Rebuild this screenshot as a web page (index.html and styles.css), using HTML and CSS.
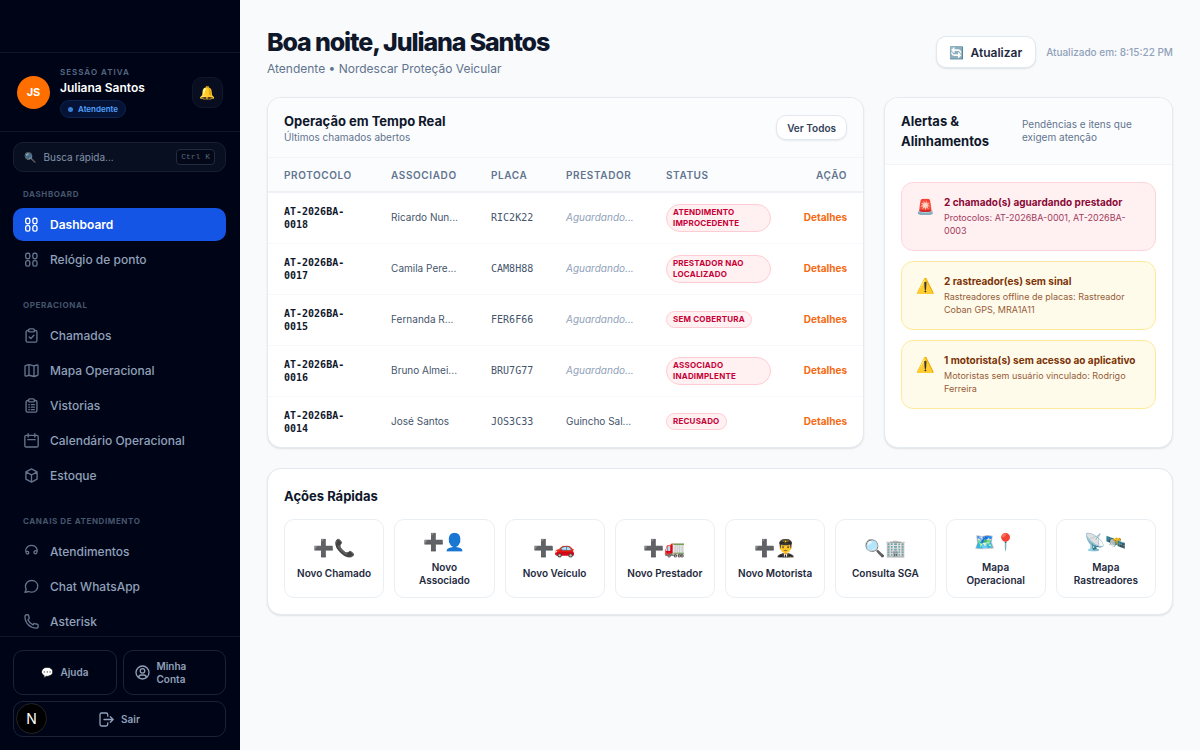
FILE: index.html
```html
<!DOCTYPE html>
<html lang="pt-BR">
<head>
    <meta charset="UTF-8">
    <meta name="viewport" content="width=device-width, initial-scale=1">
    <title>Dashboard - Nordescar</title>
    <link rel="stylesheet" href="styles.css">
</head>
<body>
<div class="layout">
    <aside class="sidebar">
        <div class="brand"></div>
        <div class="profile">
            <div class="avatar">JS</div>
            <div class="profile-info">
                <span class="profile-label">Sessão ativa</span>
                <strong class="profile-name">Juliana Santos</strong>
                <span class="role"><i class="dot"></i>Atendente</span>
            </div>
            <button class="bell" type="button" aria-label="Notificações">🔔</button>
        </div>

        <button class="search" type="button">
            <span class="search-icon">🔍</span>
            <span class="search-text">Busca rápida...</span>
            <kbd>Ctrl K</kbd>
        </button>

        <nav class="nav">
            <section class="nav-group">
                <h2>Dashboard</h2>
                <a class="nav-link active" href="#">
                    <svg viewBox="0 0 18 18"><rect x="2" y="1.5" width="5" height="6.6" rx="2"/><rect x="10.6" y="1.5" width="5" height="6.6" rx="2"/><rect x="2" y="10.3" width="5" height="6.6" rx="2"/><rect x="10.6" y="10.3" width="5" height="6.6" rx="2"/></svg>
                    Dashboard
                </a>
                <a class="nav-link" href="#">
                    <svg viewBox="0 0 18 18"><rect x="2" y="1.5" width="5" height="6.6" rx="2"/><rect x="10.6" y="1.5" width="5" height="6.6" rx="2"/><rect x="2" y="10.3" width="5" height="6.6" rx="2"/><rect x="10.6" y="10.3" width="5" height="6.6" rx="2"/></svg>
                    Relógio de ponto
                </a>
            </section>
            <section class="nav-group">
                <h2>Operacional</h2>
                <a class="nav-link" href="#">
                    <svg viewBox="0 0 18 18"><path d="M5.5 3H4.2A1.7 1.7 0 0 0 2.5 4.700v10.600A1.700 1.700 0 0 0 4.200 17h9.600a1.700 1.700 0 0 0 1.700-1.700V4.700A1.700 1.700 0 0 0 13.800 3h-1.300"/><rect x="5.500" y="1" width="7" height="3.600" rx="1.400"/><path d="M6.200 10.700l2 2 3.600-4"/></svg>
                    Chamados
                </a>
                <a class="nav-link" href="#">
                    <svg viewBox="0 0 18 18"><path d="M1.200 4.200Q1.200 3 2.300 2.800L6 2l6 1.500 3.300-1.100q1.500-.4 1.500 1v10.400q0 .9-.9 1.200L12 16.200 6 14.700l-3.300 1q-1.500.4-1.500-1zM6 2v12.700M12 3.500v12.700"/></svg>
                    Mapa Operacional
                </a>
                <a class="nav-link" href="#">
                    <svg viewBox="0 0 18 18"><path d="M5.500 3H4.200A1.700 1.700 0 0 0 2.500 4.700v10.600A1.700 1.700 0 0 0 4.200 17h9.600a1.700 1.700 0 0 0 1.700-1.700V4.700A1.700 1.700 0 0 0 13.800 3h-1.300"/><rect x="5.500" y="1" width="7" height="3.600" rx="1.400"/><path d="M5.800 8h.6M8.800 8h3.600M5.800 11h.6M8.800 11h3.600M5.800 14h.6M8.800 14h3.600"/></svg>
                    Vistorias
                </a>
                <a class="nav-link" href="#">
                    <svg viewBox="0 0 18 18"><rect x="1" y="2.800" width="16" height="14" rx="1.600"/><path d="M5 .8v4M13 .8v4M4.600 8h8.800"/></svg>
                    Calendário Operacional
                </a>
                <a class="nav-link" href="#">
                    <svg viewBox="0 0 18 18"><path d="M9 1l6.700 3.600v8.800L9 17l-6.700-3.600V4.600zM2.300 4.600L9 8.400l6.700-3.800M9 8.400V17"/></svg>
                    Estoque
                </a>
            </section>
            <section class="nav-group">
                <h2>Canais de atendimento</h2>
                <a class="nav-link" href="#">
                    <svg viewBox="0 0 18 18"><path d="M4 12.200C1.800 10.400 1.600 7 3 4.800 5.400.6 12.600.6 15 4.800c1.400 2.400 1 6.400-1 7M4 12.200a1.700 1.700 0 1 0-.6-3.300M14 11.800a1.900 1.900 0 1 1 .7-3.600"/></svg>
                    Atendimentos
                </a>
                <a class="nav-link" href="#">
                    <svg viewBox="0 0 18 18"><path d="M9.300 1.800c4.200 0 7.200 3 7.200 6.900s-3 7-7.200 7c-1.400 0-2.500-.2-3.500-.7L1.200 16l1.500-3.800C2 11.200 1.700 10 1.700 8.800c0-4 3.200-7 7.600-7z"/></svg>
                    Chat WhatsApp
                </a>
                <a class="nav-link" href="#">
                    <svg viewBox="0 0 18 18"><path d="M1.200 3.400c0 7.600 5.900 13.500 13.400 13.500 1.400 0 2.400-1 2.400-2.300v-1c0-.7-.4-1.100-1-1.300l-2.900-.8c-.6-.2-1.100 0-1.500.5l-.7 1c-3-1.200-5.100-3.300-6.200-6.100l1-.8c.5-.4.7-.9.5-1.500l-.7-2.800C5.300 1.200 4.900.9 4.200.9H3.400C2.100.9 1.200 2 1.200 3.400z"/></svg>
                    Asterisk
                </a>
            </section>
        </nav>

        <div class="sidebar-footer">
            <button class="foot-btn" type="button"><span class="bubble">💬</span>Ajuda</button>
            <button class="foot-btn account" type="button">
                <svg viewBox="0 0 18 18"><circle cx="9" cy="9" r="7.800"/><circle cx="9" cy="7" r="2.700"/><path d="M4.300 15c.2-2 1.700-3 3.400-3h2.600c1.700 0 3.200 1 3.400 3"/></svg>
                <span>Minha Conta</span>
            </button>
            <button class="foot-btn logout" type="button">
                <svg viewBox="0 0 18 18"><path d="M10.500 5V3.200c0-1.200-.8-2-2-2H3.200c-1.200 0-2 .8-2 2v11.600c0 1.200.8 2 2 2h5.300c1.200 0 2-.8 2-2V13M6 9h11M13.600 5.600L17 9l-3.400 3.400"/></svg>
                Sair
            </button>
        </div>
    </aside>

    <main class="main">
        <header class="page-header">
            <div>
                <h1>Boa noite, Juliana Santos</h1>
                <p>Atendente • Nordescar Proteção Veicular</p>
            </div>
            <div class="page-actions">
                <button class="refresh" type="button"><span>🔄</span>Atualizar</button>
                <span class="updated">Atualizado em: 8:15:22 PM</span>
            </div>
        </header>

        <div class="columns">
            <section class="card">
                <div class="card-header">
                    <div>
                        <h3>Operação em Tempo Real</h3>
                        <p>Últimos chamados abertos</p>
                    </div>
                    <button class="see-all" type="button">Ver Todos</button>
                </div>
                <table class="calls">
                    <thead>
                        <tr>
                            <th class="col-protocol">Protocolo</th>
                            <th class="col-name">Associado</th>
                            <th class="col-plate">Placa</th>
                            <th class="col-name">Prestador</th>
                            <th class="col-status">Status</th>
                            <th class="col-action">Ação</th>
                        </tr>
                    </thead>
                    <tbody>
                        <tr>
                            <td class="protocol">AT-2026BA-0018</td>
                            <td class="name">Ricardo Nun...</td>
                            <td class="plate">RIC2K22</td>
                            <td class="name waiting">Aguardando...</td>
                            <td><span class="badge">Atendimento improcedente</span></td>
                            <td class="action"><a href="#">Detalhes</a></td>
                        </tr>
                        <tr>
                            <td class="protocol">AT-2026BA-0017</td>
                            <td class="name">Camila Pere...</td>
                            <td class="plate">CAM8H88</td>
                            <td class="name waiting">Aguardando...</td>
                            <td><span class="badge">Prestador nao localizado</span></td>
                            <td class="action"><a href="#">Detalhes</a></td>
                        </tr>
                        <tr>
                            <td class="protocol">AT-2026BA-0015</td>
                            <td class="name">Fernanda R...</td>
                            <td class="plate">FER6F66</td>
                            <td class="name waiting">Aguardando...</td>
                            <td><span class="badge">Sem cobertura</span></td>
                            <td class="action"><a href="#">Detalhes</a></td>
                        </tr>
                        <tr>
                            <td class="protocol">AT-2026BA-0016</td>
                            <td class="name">Bruno Almei...</td>
                            <td class="plate">BRU7G77</td>
                            <td class="name waiting">Aguardando...</td>
                            <td><span class="badge">Associado inadimplente</span></td>
                            <td class="action"><a href="#">Detalhes</a></td>
                        </tr>
                        <tr>
                            <td class="protocol">AT-2026BA-0014</td>
                            <td class="name">José Santos</td>
                            <td class="plate">JOS3C33</td>
                            <td class="name">Guincho Sal...</td>
                            <td><span class="badge">Recusado</span></td>
                            <td class="action"><a href="#">Detalhes</a></td>
                        </tr>
                    </tbody>
                </table>
            </section>

            <section class="card">
                <div class="card-header alerts-header">
                    <h3>Alertas &amp; Alinhamentos</h3>
                    <p>Pendências e itens que exigem atenção</p>
                </div>
                <div class="alerts">
                    <div class="alert danger">
                        <span class="alert-icon">🚨</span>
                        <div>
                            <h4>2 chamado(s) aguardando prestador</h4>
                            <p>Protocolos: AT-2026BA-0001, AT-2026BA-0003</p>
                        </div>
                    </div>
                    <div class="alert warning">
                        <span class="alert-icon">⚠️</span>
                        <div>
                            <h4>2 rastreador(es) sem sinal</h4>
                            <p>Rastreadores offline de placas: Rastreador Coban GPS, MRA1A11</p>
                        </div>
                    </div>
                    <div class="alert warning">
                        <span class="alert-icon">⚠️</span>
                        <div>
                            <h4>1 motorista(s) sem acesso ao aplicativo</h4>
                            <p>Motoristas sem usuário vinculado: Rodrigo Ferreira</p>
                        </div>
                    </div>
                </div>
            </section>
        </div>

        <section class="card quick">
            <h3>Ações Rápidas</h3>
            <div class="tiles">
                <a class="tile" href="#"><span class="tile-icon">➕📞</span>Novo Chamado</a>
                <a class="tile" href="#"><span class="tile-icon">➕👤</span>Novo Associado</a>
                <a class="tile" href="#"><span class="tile-icon">➕🚗</span>Novo Veículo</a>
                <a class="tile" href="#"><span class="tile-icon">➕🚛</span>Novo Prestador</a>
                <a class="tile" href="#"><span class="tile-icon">➕👨‍✈️</span>Novo Motorista</a>
                <a class="tile" href="#"><span class="tile-icon">🔍🏢</span>Consulta SGA</a>
                <a class="tile" href="#"><span class="tile-icon">🗺️📍</span>Mapa Operacional</a>
                <a class="tile" href="#"><span class="tile-icon">📡🛰️</span>Mapa Rastreadores</a>
            </div>
        </section>
    </main>
</div>
<div class="dev-badge">N</div>
</body>
</html>
```
FILE: styles.css
```css
* { box-sizing: border-box; }
body { margin: 0; font-family: Inter, "Noto Color Emoji", sans-serif; font-size: 11px; color: #0f172b; background: #f8fafc; }
h1, h2, h3, h4, p { margin: 0; }
button { font-family: inherit; cursor: pointer; }
a { text-decoration: none; color: inherit; }

.layout { display: flex; height: 100vh; }

/* Sidebar */
.sidebar { width: 240px; flex-shrink: 0; display: flex; flex-direction: column; background: #000417; color: #90a1b9; }
.sidebar svg { width: 15px; height: 15px; flex-shrink: 0; fill: none; stroke: currentColor; stroke-width: 1.6; stroke-linecap: round; stroke-linejoin: round; }
.brand { height: 53px; flex-shrink: 0; border-bottom: 1px solid #10162a; }
.profile { display: flex; align-items: center; gap: 10px; padding: 13px 17px; border-bottom: 1px solid #10162a; }
.avatar { width: 33px; height: 33px; border-radius: 50%; background: #ff6f00; color: #fff; font-size: 11px; font-weight: 700; display: flex; align-items: center; justify-content: center; }
.profile-info { flex: 1; display: flex; flex-direction: column; align-items: flex-start; }
.profile-label { font-size: 8px; line-height: 12px; font-weight: 600; letter-spacing: 1px; text-transform: uppercase; color: #5a6a83; }
.profile-name { font-size: 12px; line-height: 20px; font-weight: 600; color: #fff; }
.role { display: flex; align-items: center; gap: 5px; height: 18px; margin-top: 2px; padding: 0 7px; border: 1px solid #0d2350; border-radius: 9px; background: #051336; color: #51a2ff; font-size: 8px; font-weight: 600; }
.dot { width: 5px; height: 5px; border-radius: 50%; background: #3b82d6; }
.bell { width: 31px; height: 31px; padding: 0; border: 1px solid #10182b; border-radius: 10px; background: #080e20; font-size: 13px; }

.search { display: flex; align-items: center; gap: 7px; height: 30px; flex-shrink: 0; margin: 10px 14px 0 13px; padding: 0 10px; border: 1px solid #171f31; border-radius: 10px; background: #080f20; color: #8494ab; }
.search-icon { font-size: 10px; opacity: .8; }
.search-text { flex: 1; text-align: left; font-size: 10px; }
kbd { padding: 2px 4px; border: 1px solid #232c3f; border-radius: 4px; background: #030819; color: #56647c; font: 8px/10px "Liberation Mono", monospace; }

.nav { flex: 1; min-height: 0; overflow: hidden; display: flex; flex-direction: column; gap: 22px; padding: 15px 14px 0 13px; }
.nav-group { display: flex; flex-direction: column; gap: 2px; }
.nav-group h2 { margin-bottom: 4px; padding-left: 10px; font-size: 8px; line-height: 15px; font-weight: 700; letter-spacing: .6px; text-transform: uppercase; color: #45556c; }
.nav-link { display: flex; align-items: center; gap: 11px; height: 33px; padding: 0 11px; border-radius: 10px; font-size: 12px; font-weight: 500; }
.nav-link svg { color: #65758d; }
.nav-link.active { background: #1455e6; color: #fff; font-weight: 600; }
.nav-link.active svg { color: #fff; }

.sidebar-footer { display: grid; grid-template-columns: 1fr 1fr; gap: 6px; padding: 13px 14px 13px 13px; border-top: 1px solid #10162a; }
.foot-btn { display: flex; align-items: center; justify-content: center; gap: 7px; height: 45px; padding: 0 10px; border: 1px solid #1b2337; border-radius: 10px; background: transparent; color: #90a1b9; font-size: 10px; line-height: 13px; font-weight: 600; }
.foot-btn.account { justify-content: flex-start; text-align: left; padding: 0 20px 0 11px; }
.foot-btn.logout { grid-column: 1 / -1; height: 36px; }
.bubble { font-size: 10px; }

.dev-badge { position: fixed; left: 16px; bottom: 16px; width: 31px; height: 31px; border-radius: 50%; background: #000; border: 1px solid #242424; color: #fff; font-size: 14px; font-weight: 400; display: flex; align-items: center; justify-content: center; }

/* Content */
.main { flex: 1; min-width: 0; overflow: auto; padding: 27px; display: flex; flex-direction: column; gap: 20px; }
.page-header { display: flex; justify-content: space-between; align-items: center; }
.page-header h1 { font-size: 25px; line-height: 30px; font-weight: 800; letter-spacing: -.045em; }
.page-header p { margin-top: 3px; font-size: 12px; line-height: 17px; color: #62748e; }
.page-actions { display: flex; align-items: center; gap: 10px; }
.refresh { display: flex; align-items: center; gap: 6px; height: 32px; padding: 0 13px; border: 1px solid #e2e8f0; border-radius: 10px; background: #fff; box-shadow: 0 1px 2px rgba(0,0,0,.1); color: #1d293d; font-size: 12px; font-weight: 600; }
.updated { font-size: 10px; font-weight: 500; color: #90a1b9; }

.columns { display: grid; grid-template-columns: minmax(0, 1fr) 289px; gap: 20px; }
.card { background: #fff; border: 1px solid #e5eaf0; border-radius: 14px; box-shadow: 0 1px 2px rgba(0,0,0,.1); overflow: hidden; }
.card h3 { font-size: 13px; line-height: 20px; font-weight: 700; }
.card-header { display: flex; justify-content: space-between; align-items: center; padding: 13px 16px; background: #fbfcfe; border-bottom: 1px solid #f1f5f9; }
.card-header p { font-size: 10px; line-height: 13px; color: #62748e; }
.see-all { height: 25px; padding: 0 10px; border: 1px solid #e2e8f0; border-radius: 10px; background: #fff; box-shadow: 0 1px 2px rgba(0,0,0,.08); color: #314158; font-size: 10px; font-weight: 600; }

.calls { width: 100%; table-layout: fixed; border-collapse: collapse; }
.calls th { height: 34px; padding: 0 0 0 16px; text-align: left; font-size: 10px; font-weight: 600; letter-spacing: .6px; text-transform: uppercase; color: #62748e; background: #fbfcfe; border-bottom: 2px solid #eef2f6; }
.calls td { height: 51px; padding: 0 16px; font-size: 10px; line-height: 13px; color: #45556c; border-bottom: 1px solid #f6f8fa; }
.calls tr:last-child td { border-bottom: 0; }
.calls .col-protocol { width: 18%; }
.calls .col-name { width: 16.8%; }
.calls .col-plate { width: 12.6%; }
.calls .col-status { width: 23%; }
.calls .col-action, .calls .action { text-align: right; padding: 0 16px 0 0; }
.calls .protocol { font-family: "DejaVu Sans Mono", monospace; font-weight: 700; color: #0f172b; }
.calls .plate { font-family: "DejaVu Sans Mono", monospace; padding-right: 0; }
.calls .name { padding-right: 0; white-space: nowrap; }
.calls .waiting { font-style: italic; color: #90a1b9; }
.calls .action a { color: #f56a12; font-weight: 700; }
.badge { display: inline-block; padding: 2px 6px; border: 1px solid #ffccd3; border-radius: 14px; background: #fff1f2; color: #c70036; font-size: 8px; line-height: 11px; font-weight: 700; letter-spacing: .2px; text-transform: uppercase; vertical-align: middle; }

.alerts-header h3 { width: 100px; }
.alerts-header p { width: 134px; }
.alerts { display: flex; flex-direction: column; gap: 10px; padding: 17px 16px; }
.alert { display: flex; gap: 10px; padding: 13px 14px; border: 1px solid; border-radius: 12px; }
.alert-icon { width: 18px; font-size: 15px; line-height: 22px; }
.alert h4 { margin-bottom: 2px; font-size: 10px; line-height: 13px; font-weight: 700; }
.alert p { font-size: 9px; line-height: 13px; opacity: .8; }
.danger { background: #fff1f2; border-color: #fdd5da; color: #8b0836; }
.warning { background: #fffbeb; border-color: #fee99a; color: #7b3306; }

.quick { padding: 17px 16px 16px; }
.tiles { display: grid; grid-template-columns: repeat(8, 1fr); gap: 10px; margin-top: 13px; }
.tile { display: flex; flex-direction: column; align-items: center; justify-content: center; gap: 8px; height: 79px; padding: 0 10px; border: 1px solid #e9eef3; border-radius: 10px; text-align: center; font-size: 10px; line-height: 13px; font-weight: 600; color: #1d293d; }
.tile-icon { font-size: 17px; line-height: 22px; white-space: nowrap; }
```
